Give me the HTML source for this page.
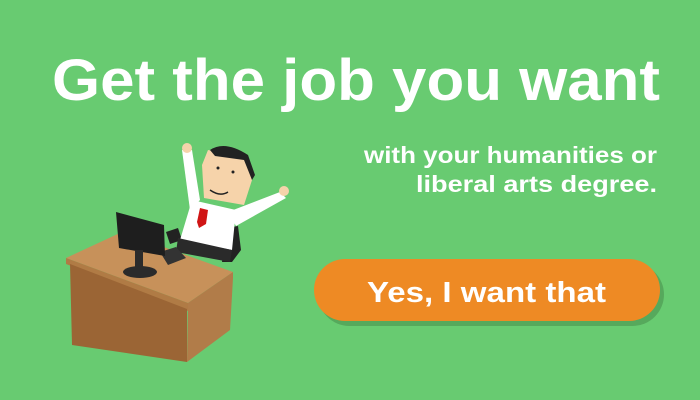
<!DOCTYPE html>
<html><head><meta charset="utf-8"><style>
html,body{margin:0;padding:0}
body{width:700px;height:400px;background:#68cb71;overflow:hidden;position:relative;font-family:"Liberation Sans",sans-serif}
svg{position:absolute;left:0;top:0}
</style></head><body>
<svg width="700" height="400" viewBox="0 0 700 400">
<text x="52" y="100" font-family="Liberation Sans" font-weight="bold" font-size="58" fill="#fff" textLength="608" lengthAdjust="spacingAndGlyphs">Get the job you want</text>
<text x="657" y="163" text-anchor="end" font-family="Liberation Sans" font-weight="bold" font-size="23" fill="#fff" textLength="293" lengthAdjust="spacingAndGlyphs">with your humanities or</text>
<text x="657" y="192" text-anchor="end" font-family="Liberation Sans" font-weight="bold" font-size="23" fill="#fff" textLength="241" lengthAdjust="spacingAndGlyphs">liberal arts degree.</text>
<rect x="318" y="263" width="346" height="63" rx="31.5" fill="#56a95c"/>
<rect x="314" y="259" width="346" height="62" rx="31" fill="#ee8a24"/>
<text x="367" y="302" font-family="Liberation Sans" font-weight="bold" font-size="29" fill="#fff" textLength="239" lengthAdjust="spacingAndGlyphs">Yes, I want that</text>
<!-- chair -->
<path d="M166 232 L178 228 L182 240 L170 244Z" fill="#222"/>
<path d="M226 228 L238 226 L241 250 L232 262 L222 262Z" fill="#222"/>
<!-- right arm -->
<path d="M228 212 L280 192 L286 198 L236 226Z" fill="#fff"/>
<circle cx="284" cy="191" r="5" fill="#f6d3aa"/>
<!-- left arm -->
<path d="M182 150 L192 150 L200 200 L190 210Z" fill="#fff"/>
<circle cx="187" cy="148" r="5" fill="#f6d3aa"/>
<!-- torso -->
<path d="M192 200 L236 210 L232 250 L180 240Z" fill="#fff"/>
<path d="M178 238 L232 250 L230 262 L176 252Z" fill="#2a2a2a"/>
<!-- tie -->
<path d="M200 208 L208 210 L206 224 L199 228 L197 222Z" fill="#d01515"/>
<!-- head -->
<path d="M202 165 L208 150 L248 158 L252 180 L244 205 L204 198Z" fill="#f6d3aa"/>
<path d="M210 150 Q225 140 248 155 L255 175 L252 180 L244 160 L215 156 Z" fill="#222"/>
<circle cx="218" cy="168" r="1.5" fill="#222"/><circle cx="233" cy="172" r="1.5" fill="#222"/>
<path d="M210 190 Q220 197 228 192" stroke="#222" stroke-width="1.5" fill="none"/>
<!-- desk -->
<path d="M66 258 L122 232 L233 272 L188 303Z" fill="#c7915a"/>
<path d="M66 258 L188 303 L188 311 L66 264Z" fill="#b07b45"/>
<path d="M70 264 L187 309 L187 362 L72 345Z" fill="#9b6535"/>
<path d="M188 303 L233 272 L233 278 L230 330 L187 362Z" fill="#b17c49"/>
<!-- keyboard -->
<path d="M160 252 L176 247 L186 258 L168 265Z" fill="#333"/>
<!-- monitor -->
<path d="M116 212 L164 225 L165 256 L119 248Z" fill="#1e1e1e"/>
<rect x="135" y="250" width="8" height="18" fill="#2b2b2b"/>
<ellipse cx="140" cy="272" rx="17" ry="6" fill="#2b2b2b"/>
</svg>
</body></html>
